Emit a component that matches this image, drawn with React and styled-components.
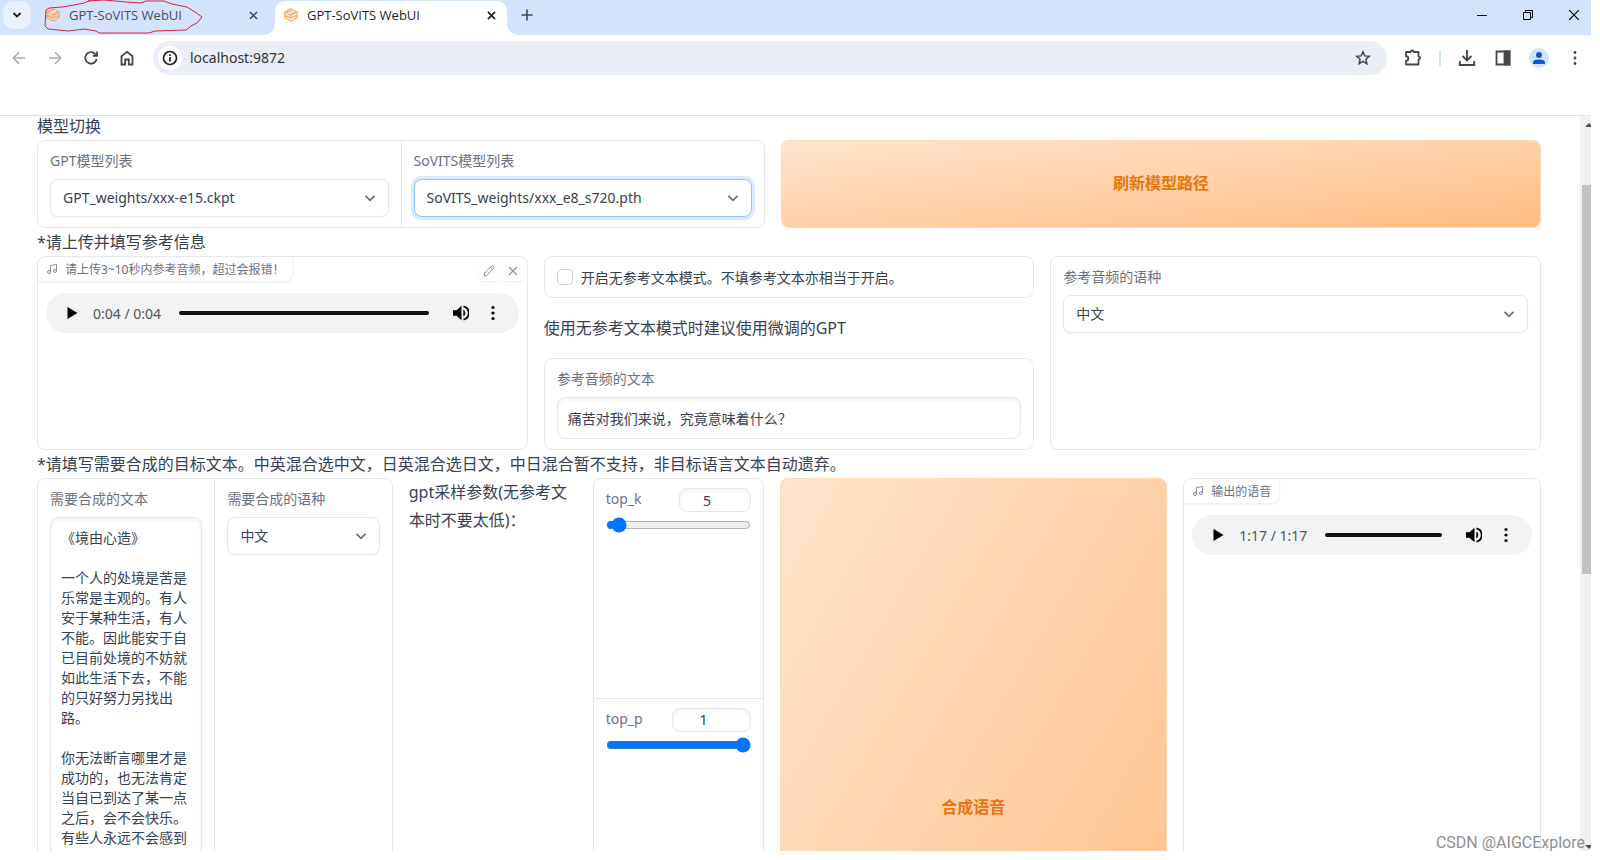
import React, { useState } from 'react';
import styled, { createGlobalStyle } from 'styled-components';

const $font = '"Noto Sans", "Noto Sans CJK SC", sans-serif';
const $text = '#374151';
const $label = '#6b7280';
const $line = '#e5e7eb';
const $chrome = '#d3e2fd';
const $icon = '#474747';
const $orange = '#e8750f';

const STORY = `《境由心造》

一个人的处境是苦是乐常是主观的。有人安于某种生活，有人不能。因此能安于自已目前处境的不妨就如此生活下去，不能的只好努力另找出路。

你无法断言哪里才是成功的，也无法肯定当自已到达了某一点之后，会不会快乐。有些人永远不会感到`;

const GlobalStyle = createGlobalStyle`
  * {
    box-sizing: border-box;
  }
  body {
    margin: 0;
    background: #fff;
    color: ${$text};
    font-family: ${$font};
    font-size: 14px;
  }
  button, input, select, textarea {
    font: inherit;
    color: inherit;
    margin: 0;
  }
`;

const Window = styled.div`
  height: 100vh;
  padding: 0 9px 9px 0;
  display: flex;
  flex-direction: column;
  overflow: hidden;
  position: relative;
`;

const IconButton = styled.button`
  display: flex;
  align-items: center;
  justify-content: center;
  flex: none;
  width: ${(p) => p.$w || 28}px;
  height: 28px;
  padding: 0;
  border: 0;
  border-radius: 14px;
  background: none;
  color: ${(p) => p.$color || $icon};
`;

/* ---------- tab strip ---------- */

const TabStrip = styled.div`
  display: flex;
  align-items: flex-start;
  height: 35px;
  flex: none;
  padding: 1px 0 0 3px;
  background: ${$chrome};
  overflow: hidden;
`;

const TabSearch = styled(IconButton)`
  border-radius: 10px;
  background: #e9f0fe;
  color: #1f1f1f;
`;

const Tab = styled.div`
  position: relative;
  display: flex;
  align-items: center;
  width: ${(p) => (p.$active ? 232 : 244)}px;
  height: 34px;
  padding: ${(p) => (p.$active ? '0 2px 6px 9px' : '0 8px 6px 15px')};
  border-radius: 10px 10px 0 0;
  background: ${(p) => (p.$active ? '#fff' : 'none')};
  color: ${(p) => (p.$active ? '#1f1f1f' : '#474f5e')};
  font-family: "Open Sans", sans-serif;
  font-size: 13px;

  &::before, &::after {
    content: '';
    display: ${(p) => (p.$active ? 'block' : 'none')};
    position: absolute;
    bottom: 0;
    width: 10px;
    height: 10px;
  }
  &::before {
    right: 100%;
    background: radial-gradient(circle at 0 0, ${$chrome} 9px, #fff 10px);
  }
  &::after {
    left: 100%;
    background: radial-gradient(circle at 100% 0, ${$chrome} 9px, #fff 10px);
  }
`;

const TabTitle = styled.span`
  flex: 1;
  margin-left: 9px;
  line-height: 20px;
  white-space: nowrap;
`;

const WindowButtons = styled.div`
  display: flex;
  margin: 0 -6px 0 auto;
`;

/* ---------- toolbar ---------- */

const Toolbar = styled.div`
  display: flex;
  align-items: center;
  gap: 8px;
  flex: none;
  height: 46px;
  padding: 0 2px 0 5px;
`;

const AddressBar = styled.div`
  flex: 1;
  display: flex;
  align-items: center;
  height: 34px;
  margin-left: 4px;
  padding: 0 10px 0 5px;
  border-radius: 17px;
  background: #ebeef7;
`;

const SiteInfo = styled(IconButton)`
  width: 24px;
  height: 24px;
  background: #fff;
  color: #1f1f1f;
`;

const Address = styled.input`
  flex: 1;
  min-width: 0;
  margin-left: 8px;
  padding: 0 0 1px;
  border: 0;
  outline: 0;
  background: none;
  color: #333;
  font-size: 14px;
`;

const ToolbarLine = styled.span`
  width: 2px;
  height: 16px;
  margin-right: 4px;
  background: ${$chrome};
`;

const Avatar = styled.button`
  display: flex;
  align-items: center;
  justify-content: center;
  width: 20px;
  height: 20px;
  margin: 0 4px;
  padding: 0;
  border: 0;
  border-radius: 50%;
  background: ${$chrome};
`;

const BookmarkBar = styled.div`
  flex: none;
  height: 35px;
  border-bottom: 1px solid #dfe1e4;
`;

/* ---------- page ---------- */

const Viewport = styled.div`
  flex: 1;
  display: flex;
  min-height: 0;
  overflow: hidden;
`;

const Page = styled.main`
  flex: 1;
  min-width: 0;
  margin-top: -4px;
  padding: 0 39px 0 37px;
`;

const Heading = styled.p`
  margin: 0;
  font-size: 16px;
  line-height: 28px;
`;

const Row = styled.div`
  display: grid;
  grid-template-columns: ${(p) => p.$columns};
  gap: 16px;
  height: ${(p) => p.$height}px;
`;

const Card = styled.div`
  display: flex;
  min-width: 0;
  border: 1px solid ${$line};
  border-radius: 8px;
  background: #fff;
`;

const SplitCard = styled(Card)`
  flex-direction: ${(p) => (p.$stack ? 'column' : 'row')};

  > * + * {
    border: 0 solid ${$line};
    border-width: ${(p) => (p.$stack ? '1px 0 0' : '0 0 0 1px')};
  }
`;

const Cell = styled.div`
  flex: 1;
  min-width: 0;
  padding: 9px 12px 10px;
`;

const Label = styled.label`
  display: block;
  margin-bottom: 7px;
  color: ${$label};
  line-height: 22px;
  white-space: nowrap;
`;

const SelectBox = styled.div`
  position: relative;

  svg {
    position: absolute;
    right: 12px;
    top: 12px;
    color: ${$label};
    pointer-events: none;
  }
`;

const Select = styled.select`
  appearance: none;
  display: block;
  width: 100%;
  height: 38px;
  padding: 0 32px 1px 12px;
  border: 1px solid ${(p) => (p.$focused ? '#93c5fd' : $line)};
  border-radius: 8px;
  outline: 0;
  background: #fff;
  box-shadow: ${(p) => (p.$focused ? '0 0 0 3px #dbeafe' : '0 1px 2px rgba(0, 0, 0, 0.05)')};
`;

const inset = 'inset 0 2px 4px rgba(0, 0, 0, 0.06)';

const TextInput = styled.input`
  display: block;
  width: 100%;
  height: 42px;
  padding: 0 10px 1px;
  border: 1px solid ${$line};
  border-radius: 8px;
  outline: 0;
  box-shadow: ${inset};
`;

const TextArea = styled.textarea`
  display: block;
  width: 100%;
  height: 600px;
  padding: 10px;
  border: 1px solid ${$line};
  border-radius: 8px;
  outline: 0;
  box-shadow: ${inset};
  line-height: 20px;
  resize: none;
  overflow: hidden;
`;

const Column = styled.div`
  display: flex;
  flex-direction: column;
  justify-content: space-between;
`;

const CheckCard = styled(Card)`
  align-items: center;
  height: 42px;
  padding: 0 12px;
`;

const CheckLabel = styled.label`
  display: flex;
  align-items: center;
  gap: 8px;
`;

const Checkbox = styled.input`
  appearance: none;
  width: 16px;
  height: 16px;
  border: 1px solid #d1d5db;
  border-radius: 4px;
  background: #fff;

  &:checked {
    background: #2563eb;
  }
`;

const PrimaryButton = styled.button`
  padding: 0 0 4px;
  border: 1px solid #ffd8b4;
  border-radius: 8px;
  background: linear-gradient(to bottom right, #ffe5cc, #ffbd82);
  color: ${$orange};
  font-size: 16px;
  font-weight: 600;
`;

const AudioCard = styled(Card)`
  flex-direction: column;
`;

const AudioHead = styled.div`
  display: flex;
  align-items: flex-start;
  gap: 4px;
  padding-right: 4px;
`;

const AudioTag = styled.div`
  display: flex;
  align-items: center;
  gap: 7px;
  height: 25px;
  margin-right: auto;
  padding: 0 8px;
  border: solid #f1f2f4;
  border-width: 0 1px 1px 0;
  border-radius: 8px 0 8px 0;
  box-shadow: 0 1px 2px rgba(0, 0, 0, 0.05);
  color: ${$label};
  font-size: 12px;
  white-space: nowrap;
`;

const SmallButton = styled.button`
  display: flex;
  align-items: center;
  justify-content: center;
  width: 20px;
  height: 20px;
  margin-top: 4px;
  padding: 0;
  border: 0;
  border-radius: 4px;
  background: #fff;
  box-shadow: 0 1px 2px rgba(0, 0, 0, 0.08);
  color: #8a919d;
`;

const Player = styled.div`
  display: flex;
  align-items: center;
  height: 40px;
  margin: 11px 8px 0;
  padding: 0 10px;
  border-radius: 20px;
  background: #f1f3f4;
`;

const PlayerButton = styled(IconButton)`
  width: 32px;
  color: #000;
`;

const Time = styled.span`
  margin: 0 18px 0 5px;
  color: #555;
  white-space: nowrap;
`;

const Timeline = styled.input`
  appearance: none;
  flex: 1;
  min-width: 0;
  height: 4px;
  margin-right: 16px;
  border-radius: 2px;
  background: #111;

  &::-webkit-slider-thumb {
    appearance: none;
    width: 0;
    height: 0;
  }
`;

const SliderHead = styled.div`
  display: flex;
  align-items: flex-start;
  justify-content: space-between;
  margin-bottom: 5px;
`;

const NumberInput = styled.input`
  width: ${(p) => p.$w}px;
  height: 24px;
  padding: 0;
  border: 1px solid ${$line};
  border-radius: 8px;
  outline: 0;
  box-shadow: ${inset};
  text-align: center;
`;

const Range = styled.input`
  display: block;
  width: 100%;
  height: 16px;
  accent-color: #0075ff;
`;

const SliderLabel = styled(Label)`
  margin: 0;
`;

const Scrollbar = styled.div`
  display: flex;
  flex-direction: column;
  align-items: center;
  width: 17px;
  margin-right: -6px;
  padding: 7px 0 2px;
  flex: none;
  background: #f1f1f1;
`;

const Thumb = styled.div`
  width: 13px;
  height: 389px;
  margin: 58px 0 auto;
  background: #c1c1c1;
`;

const Arrow = styled.div`
  border: solid transparent;
  border-width: ${(p) => (p.$down ? '4px 4px 0' : '0 4px 4px')};
  border-color: ${(p) => (p.$down ? '#505050 transparent' : 'transparent transparent #505050')};
`;

const Scribble = styled.svg`
  position: absolute;
  left: 42px;
  top: 0;
`;

const Watermark = styled.div`
  position: absolute;
  right: 15px;
  bottom: 7px;
  color: #8f8f8f;
  font-family: Roboto, "Liberation Sans", sans-serif;
  font-size: 16px;
  line-height: 20px;
`;

/* ---------- icons ---------- */

const Svg = ({ size = 16, box = 16, width = 1.6, children }) => (
  <svg width={size} height={size} viewBox={`0 0 ${box} ${box}`} fill="none" stroke="currentColor" strokeWidth={width}>
    {children}
  </svg>
);

const Favicon = () => (
  <Svg size={14} box={14} width={1.3}>
    <g stroke="#f9a864" strokeLinejoin="round">
      <path d="M7 .800 13 4 7 7.200 1 4Z" fill="#fcc794" />
      <path d="M1 4v5.800L7 13l6-3.200V4M1 7l3 1.600M7 10.200 13 7M7 7.200v3l-3-1.600" />
      <path d="M4.500 5.500 9.800 2.700" stroke="#fff" strokeWidth="1" />
    </g>
  </Svg>
);

const Cross = ({ size = 10, width = 1.6 }) => (
  <Svg size={size} box={10} width={width}><path d="M1 1l8 8M9 1l-8 8" /></Svg>
);

const Chevron = () => (
  <Svg size={14} box={14} width={1.8}><path d="M2.500 4.800 7 9.300 11.500 4.800" /></Svg>
);

const Music = () => (
  <Svg size={12} box={24} width={1.6}>
    <path d="M9 18V5l12-2v13" />
    <circle cx="6" cy="18" r="3" />
    <circle cx="18" cy="16" r="3" />
  </Svg>
);

const Dots = ({ size = 16, r = 1.6 }) => (
  <svg width={size} height={size} viewBox="0 0 16 16" fill="currentColor">
    <circle cx="8" cy="2.500" r={r} />
    <circle cx="8" cy="8" r={r} />
    <circle cx="8" cy="13.500" r={r} />
  </svg>
);

/* ---------- parts ---------- */

const Dropdown = ({ id, label, value, focused }) => (
  <>
    <Label htmlFor={id}>{label}</Label>
    <SelectBox>
      <Select id={id} $focused={focused}>
        <option>{value}</option>
      </Select>
      <Chevron />
    </SelectBox>
  </>
);

const Slider = ({ id, label, start, min, max, step, width }) => {
  const [value, setValue] = useState(start);
  const change = (e) => setValue(e.target.value);

  return (
    <Cell>
      <SliderHead>
        <SliderLabel htmlFor={id}>{label}</SliderLabel>
        <NumberInput $w={width} id={id} type="number" value={value} min={min} max={max} step={step} onChange={change} />
      </SliderHead>
      <Range type="range" aria-label={label} min={min} max={max} step={step} value={value} onChange={change} />
    </Cell>
  );
};

const Audio = ({ label, time, tools }) => (
  <AudioCard>
    <AudioHead>
      <AudioTag><Music />{label}</AudioTag>
      {tools && (
        <>
          <SmallButton aria-label="编辑">
            <Svg size={12} box={12} width={1}><path d="M1 11l.6-3L8.600 1q1-.6 1.800.3.9.9.1 1.700L4 10.300ZM7.500 2.200l2 2" /></Svg>
          </SmallButton>
          <SmallButton aria-label="清除"><Cross width={1.1} /></SmallButton>
        </>
      )}
    </AudioHead>
    <Player>
      <PlayerButton aria-label="播放">
        <svg width="12" height="12" viewBox="0 0 12 12"><path d="M1.500 0v12l10-6z" /></svg>
      </PlayerButton>
      <Time>{time}</Time>
      <Timeline type="range" aria-label={label} defaultValue="100" />
      <PlayerButton aria-label="音量">
        <svg width="16" height="16" viewBox="0 0 16 16">
          <path d="M0 5.200h3.500L8.500.8v14.400L3.500 10.800H0z" />
          <path d="M10.300 4.600q2 1.200 2 3.400t-2 3.400z" />
          <path d="M10.500 1.400a6.800 6.800 0 0 1 0 13.200" fill="none" stroke="#000" strokeWidth="1.700" />
        </svg>
      </PlayerButton>
      <PlayerButton aria-label="更多"><Dots /></PlayerButton>
    </Player>
  </AudioCard>
);

const Browser = () => (
  <>
    <TabStrip>
      <TabSearch aria-label="搜索标签页">
        <Svg size={10} box={10} width={1.8}><path d="M1.500 3 5 6.500 8.500 3" /></Svg>
      </TabSearch>
      <Tab>
        <Favicon />
        <TabTitle>GPT-SoVITS WebUI</TabTitle>
        <IconButton aria-label="关闭"><Cross size={9} /></IconButton>
      </Tab>
      <Tab $active>
        <Favicon />
        <TabTitle>GPT-SoVITS WebUI</TabTitle>
        <IconButton aria-label="关闭" $color="#1f1f1f"><Cross size={9} width={1.8} /></IconButton>
      </Tab>
      <IconButton aria-label="新标签页" $w={40}>
        <Svg size={12} box={12}><path d="M6 0.500v11M.500 6h11" /></Svg>
      </IconButton>
      <WindowButtons>
        <IconButton aria-label="最小化" $w={46} $color="#000">
          <Svg size={10} box={10} width={1}><path d="M0 5.500h10" /></Svg>
        </IconButton>
        <IconButton aria-label="还原" $w={46} $color="#000">
          <Svg size={10} box={10} width={1}><path d="M.500 2.500h7v7h-7zM2.500 2.500v-2h7v7h-2" /></Svg>
        </IconButton>
        <IconButton aria-label="关闭窗口" $w={46} $color="#000"><Cross size={12} width={1} /></IconButton>
      </WindowButtons>
    </TabStrip>
    <Toolbar>
      <IconButton aria-label="后退" $color="#a9abae"><Svg><path d="M14 8H2.500M8 2.300 2.300 8 8 13.700" /></Svg></IconButton>
      <IconButton aria-label="前进" $color="#a9abae"><Svg><path d="M2 8h11.500M8 2.300 13.700 8 8 13.700" /></Svg></IconButton>
      <IconButton aria-label="刷新"><Svg width={1.8}><path d="M13.600 8.800A5.700 5.700 0 1 1 12.300 4.200L13.600 5.500M14 1.500v4.300H9.700" /></Svg></IconButton>
      <IconButton aria-label="主页"><Svg width={1.8}><path d="M2.500 6.200 8 1.800l5.500 4.400v8.300H9.800V9.500H6.200v5H2.500z" /></Svg></IconButton>
      <AddressBar>
        <SiteInfo aria-label="网站信息">
          <Svg size={16} width={1.7}>
            <circle cx="8" cy="8" r="6.500" />
            <path d="M8 7v4.500M8 4.300V6" />
          </Svg>
        </SiteInfo>
        <Address aria-label="地址" defaultValue="localhost:9872" />
        <IconButton aria-label="收藏">
          <Svg width={1.5}><path d="M8 1.800l1.800 4.100 4.500.4-3.400 3 1 4.400L8 11.400l-3.900 2.300 1-4.400-3.400-3 4.500-.4z" /></Svg>
        </IconButton>
      </AddressBar>
      <IconButton aria-label="扩展程序" $w={36}>
        <Svg size={18} box={18} width={1.8}>
          <path d="M2 3h4.800a1.500 1.500 0 0 1 3 0h4.700v4.500a1.500 1.500 0 0 1 0 3v5H2v-3.700a2.300 2.300 0 0 0 0-4.600z" strokeLinejoin="round" />
        </Svg>
      </IconButton>
      <ToolbarLine />
      <IconButton aria-label="下载"><Svg size={18} box={18} width={1.9}><path d="M9 1v10.500M4.600 7 9 11.500 13.400 7M1.800 12v4h14.400v-4" /></Svg></IconButton>
      <IconButton aria-label="侧边栏"><Svg width={1.8}><path d="M1.500 1.500h13v13h-13z" /><path d="M9.500 1.500h5v13h-5z" fill="currentColor" /></Svg></IconButton>
      <Avatar aria-label="用户">
        <svg width="14" height="14" viewBox="0 0 14 14" fill="#0b57d0"><circle cx="7" cy="4" r="3" /><path d="M1 13v-1.500Q1 8.500 7 8.500t6 3V13z" /></svg>
      </Avatar>
      <IconButton aria-label="菜单"><Dots r={1.4} /></IconButton>
    </Toolbar>
    <BookmarkBar />
  </>
);

const App = () => (
  <Window>
    <GlobalStyle />
    <Browser />
    <Viewport>
      <Page>
        <Heading>模型切换</Heading>
        <Row $columns="728fr 760fr" $height={88}>
          <SplitCard>
            <Cell><Dropdown id="gpt" label="GPT模型列表" value="GPT_weights/xxx-e15.ckpt" /></Cell>
            <Cell><Dropdown id="sovits" label="SoVITS模型列表" value="SoVITS_weights/xxx_e8_s720.pth" focused /></Cell>
          </SplitCard>
          <PrimaryButton>刷新模型路径</PrimaryButton>
        </Row>
        <Heading>*请上传并填写参考信息</Heading>
        <Row $columns="1fr 1fr 1fr" $height={194}>
          <Audio label="请上传3~10秒内参考音频，超过会报错！" time="0:04 / 0:04" tools />
          <Column>
            <CheckCard>
              <CheckLabel>
                <Checkbox type="checkbox" />
                开启无参考文本模式。不填参考文本亦相当于开启。
              </CheckLabel>
            </CheckCard>
            <Heading>使用无参考文本模式时建议使用微调的GPT</Heading>
            <Card>
              <Cell>
                <Label htmlFor="ref-text">参考音频的文本</Label>
                <TextInput id="ref-text" defaultValue="痛苦对我们来说，究竟意味着什么？" />
              </Cell>
            </Card>
          </Column>
          <Card>
            <Cell><Dropdown id="ref-lang" label="参考音频的语种" value="中文" /></Cell>
          </Card>
        </Row>
        <Heading>*请填写需要合成的目标文本。中英混合选中文，日英混合选日文，中日混合暂不支持，非目标语言文本自动遗弃。</Heading>
        <Row $columns="356fr 168fr 171fr 388fr 358fr" $height={660}>
          <SplitCard>
            <Cell>
              <Label htmlFor="text">需要合成的文本</Label>
              <TextArea id="text" defaultValue={STORY} />
            </Cell>
            <Cell><Dropdown id="lang" label="需要合成的语种" value="中文" /></Cell>
          </SplitCard>
          <Heading>gpt采样参数(无参考文本时不要太低)：</Heading>
          <SplitCard $stack>
            <Slider id="top_k" label="top_k" start={5} min={1} max={100} step={1} width={72} />
            <Slider id="top_p" label="top_p" start={1} min={0} max={1} step={0.05} width={79} />
            <Cell />
          </SplitCard>
          <PrimaryButton>合成语音</PrimaryButton>
          <Audio label="输出的语音" time="1:17 / 1:17" />
        </Row>
      </Page>
      <Scrollbar>
        <Arrow />
        <Thumb />
        <Arrow $down />
      </Scrollbar>
    </Viewport>
    <Scribble width="164" height="36" fill="none" stroke="#d0253a">
      <path d="M4 10 7 8 20 7 32 5 42 3 49 0M46 1 62 0 84 2 99 3 104 1 122 1 130 4 145 7 153 12 160 17 155 23 149 26 144 30 113 31 107 33 57 33 54 31 42 29 26 31 6 29 3 26 4 10" />
    </Scribble>
    <Watermark>CSDN @AIGCExplore</Watermark>
  </Window>
);

export default App;
